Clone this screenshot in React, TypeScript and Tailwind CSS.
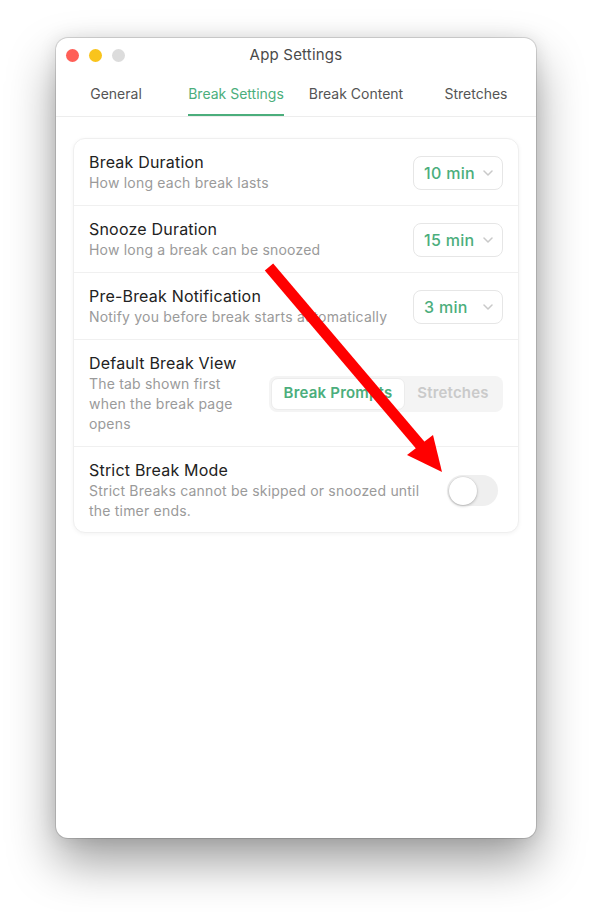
import React from 'react';

const GREEN = 'text-[#4bae7c]';

type Row = {
  title: string;
  hint: string;
  control: React.ReactNode;
  narrow?: boolean;
};

function Select({ value }: { value: string }) {
  return (
    <div className="w-[90px] h-[34px] shrink-0 rounded-[8px] border border-[#e6e6e6] bg-white flex items-center justify-between pl-[10px] pr-[9px]">
      <span className={`text-[16px] font-medium leading-none tracking-[0.3px] ${GREEN}`}>{value}</span>
      <svg width="10" height="6" viewBox="0 0 10 6" fill="none">
        <path d="M1 1l4 4 4-4" stroke="#c9c9c9" strokeWidth="1.5" strokeLinecap="round" strokeLinejoin="round" />
      </svg>
    </div>
  );
}

function Segmented() {
  return (
    <div className="w-[234px] h-[36px] shrink-0 rounded-[8px] bg-[#f4f4f4] p-[2px] flex">
      <div className="w-[134px] rounded-[7px] bg-white border border-[#ececec] flex items-center justify-center">
        <span className={`text-[15px] font-semibold tracking-[0.2px] ${GREEN}`}>Break Prompts</span>
      </div>
      <div className="flex-1 flex items-center justify-center">
        <span className="text-[15px] font-semibold tracking-[0.2px] text-[#cacaca]">Stretches</span>
      </div>
    </div>
  );
}

function Toggle() {
  return (
    <div className="w-[51px] h-[31px] mr-[5px] shrink-0 rounded-full bg-[#efefef] p-[2px] flex items-center">
      <div className="w-[28px] h-[28px] rounded-full bg-white shadow-[0_1px_3px_rgba(0,0,0,0.25),0_0_0_0.5px_rgba(0,0,0,0.06)]" />
    </div>
  );
}

const rows: Row[] = [
  { title: 'Break Duration', hint: 'How long each break lasts', control: <Select value="10 min" /> },
  { title: 'Snooze Duration', hint: 'How long a break can be snoozed', control: <Select value="15 min" /> },
  {
    title: 'Pre-Break Notification',
    hint: 'Notify you before break starts automatically',
    control: <Select value="3 min" />,
  },
  {
    title: 'Default Break View',
    hint: 'The tab shown first when the break page opens',
    control: <Segmented />,
    narrow: true,
  },
  {
    title: 'Strict Break Mode',
    hint: 'Strict Breaks cannot be skipped or snoozed until the timer ends.',
    control: <Toggle />,
  },
];

const tabs = ['General', 'Break Settings', 'Break Content', 'Stretches'];

export default function App() {
  return (
    <div className="relative w-[592px] h-[912px] bg-white font-['Inter','Liberation_Sans',sans-serif]">
      <div className="flex justify-center pt-[38px]">
        <div className="w-[480px] h-[800px] rounded-[12px] bg-white overflow-hidden shadow-[0_0_0_1px_rgba(0,0,0,0.13),0_24px_48px_rgba(0,0,0,0.38),0_0_18px_rgba(0,0,0,0.10)]">
          {/* title bar */}
          <div className="h-[32px] pt-[2px] grid grid-cols-[1fr_auto_1fr] items-center">
            <div className="flex items-center gap-[10px] pl-[10px]">
              <span className="w-[13px] h-[13px] rounded-full bg-[#ff5f57]" />
              <span className="w-[13px] h-[13px] rounded-full bg-[#f9c41c]" />
              <span className="w-[13px] h-[13px] rounded-full bg-[#dcdcdc]" />
            </div>
            <div className="text-[15px] tracking-[0.2px] text-[#4a4a4a]">App Settings</div>
            <div />
          </div>

          {/* tabs */}
          <div className="h-[47px] grid grid-cols-4 border-b border-[#ededed]">
            {tabs.map((t) => {
              const active = t === 'Break Settings';
              return (
                <div key={t} className="flex justify-center items-end">
                  <span
                    className={`text-[14px] leading-[17px] pb-[12px] border-b-2 ${
                      active ? 'border-[#4bae7c] text-[#4bae7c]' : 'border-transparent text-[#555555]'
                    }`}
                  >
                    {t}
                  </span>
                </div>
              );
            })}
          </div>

          {/* settings card */}
          <div className="px-[17px] pt-[21px]">
            <div className="rounded-[12px] border border-[#efefef] bg-white shadow-[0_1px_4px_rgba(0,0,0,0.05)]">
              {rows.map((r, i) => (
                <div
                  key={r.title}
                  className={`flex items-center gap-4 px-[15px] ${
                    i < rows.length - 1 ? 'pt-[13px] pb-[12px] border-b border-[#f0f0f0]' : 'pt-[13px] pb-[11px]'
                  }`}
                >
                  <div className={r.narrow ? 'w-[150px] mr-auto' : 'flex-1 min-w-0'}>
                    <div className="text-[16px] leading-[20px] tracking-[0.2px] text-[#222222]">{r.title}</div>
                    <div className="mt-[1px] text-[14px] leading-[20px] tracking-[0.2px] text-[#9a9a9a]">{r.hint}</div>
                  </div>
                  {r.control}
                </div>
              ))}
            </div>
          </div>
        </div>
      </div>

      {/* annotation arrow */}
      <svg className="absolute inset-0 pointer-events-none" width="592" height="912" viewBox="0 0 592 912">
        <line x1="269" y1="267" x2="421" y2="446" stroke="#ff0000" strokeWidth="11" />
        <polygon points="407,455 433,435 442,472" fill="#ff0000" />
      </svg>
    </div>
  );
}
